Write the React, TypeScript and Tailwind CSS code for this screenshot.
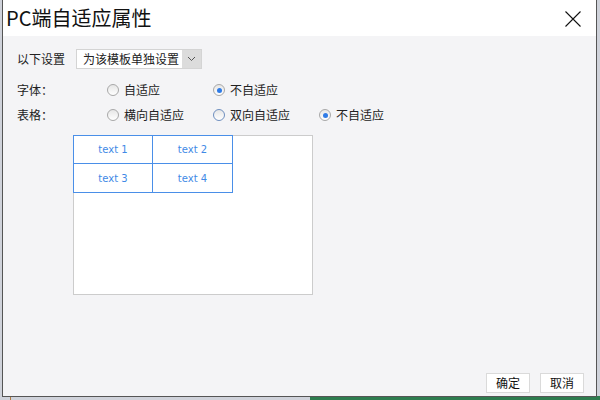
import React from "react";

const font = { fontFamily: '"Noto Sans CJK SC", "Noto Sans", sans-serif' };

function Radio({ checked, hover }: { checked?: boolean; hover?: boolean }) {
  return (
    <span
      className={`relative inline-flex h-[12px] w-[12px] items-center justify-center rounded-full border bg-gradient-to-b from-[#e6e6e6] to-[#ffffff] ${
        hover ? "border-[#6f8fbf]" : "border-[#a8a8a8]"
      }`}
    >
      {checked && <span className="h-[5px] w-[5px] rounded-full bg-[#2f7be6]" />}
    </span>
  );
}

function Opt({ label, checked, hover }: { label: string; checked?: boolean; hover?: boolean }) {
  return (
    <div className="flex w-[106px] items-center gap-[5px]">
      <Radio checked={checked} hover={hover} />
      <span>{label}</span>
    </div>
  );
}

export default function App() {
  return (
    <div className="relative h-[400px] w-[600px] overflow-hidden bg-[#cfd2da]" style={font}>
      <div className="absolute bottom-0 right-0 h-[4px] w-[290px] bg-[#2e7d4f]" />
      <div className="absolute bottom-0 left-[10px] h-[4px] w-[1px] bg-[#b07a40]" />
      <div className="absolute left-[2px] top-0 flex h-[397px] w-[595px] flex-col border-x border-b border-[#555] bg-[#f4f4f6] text-[12px] text-[#222]">
        <div className="flex h-[36px] shrink-0 items-center justify-between bg-white pl-[3px] pr-[15px]">
          <span className="text-[20px] leading-none text-[#111]">PC端自适应属性</span>
          <svg width="16" height="16" viewBox="0 0 16 16" className="mt-[1px]">
            <path d="M0.5 0.5 L15.5 15.5 M15.5 0.5 L0.5 15.5" stroke="#111" strokeWidth="1.1" />
          </svg>
        </div>
        <div className="flex flex-1 flex-col pl-[14px] pr-[12px] pt-[13px]">
          <div className="flex h-[20px] items-center">
            <span className="w-[59px]">以下设置</span>
            <div className="flex h-[20px] w-[126px] items-stretch border border-[#d4d4d4] bg-white">
              <span className="flex flex-1 items-center pl-[6px]">为该模板单独设置</span>
              <span className="flex w-[19px] items-center justify-center bg-[#dcdcdc]">
                <svg width="9" height="6" viewBox="0 0 9 6">
                  <path d="M1 1 L4.5 4.5 L8 1" fill="none" stroke="#555" strokeWidth="1" />
                </svg>
              </span>
            </div>
          </div>
          <div className="mt-[11px] flex h-[20px] items-center">
            <span className="w-[90px]">字体：</span>
            <Opt label="自适应" />
            <Opt label="不自适应" checked />
          </div>
          <div className="mt-[5px] flex h-[20px] items-center">
            <span className="w-[90px]">表格：</span>
            <Opt label="横向自适应" />
            <Opt label="双向自适应" hover />
            <Opt label="不自适应" checked />
          </div>
          <div className="ml-[56px] mt-[10px] h-[160px] w-[240px] border border-[#cccccc] bg-white">
            <div
              className="-ml-px -mt-px grid w-[160px] grid-cols-2 text-[10px] text-[#3f8ae6]"
              style={{ fontFamily: '"DejaVu Sans", sans-serif' }}
            >
              {["text 1", "text 2", "text 3", "text 4"].map((t, i) => (
                <div
                  key={t}
                  className={`flex h-[29px] items-center justify-center border-[#4a8fe8] ${
                    i === 0 ? "border" : i === 1 ? "border-y border-r" : i === 2 ? "border-x border-b" : "border-b border-r"
                  }`}
                >
                  {t}
                </div>
              ))}
            </div>
          </div>
          <div className="mt-auto flex justify-end gap-[10px] pb-[3px]">
            <button className="h-[20px] w-[44px] border border-[#dadada] bg-white text-[12px] text-[#111]">确定</button>
            <button className="h-[20px] w-[44px] border border-[#dadada] bg-white text-[12px] text-[#111]">取消</button>
          </div>
        </div>
      </div>
    </div>
  );
}
